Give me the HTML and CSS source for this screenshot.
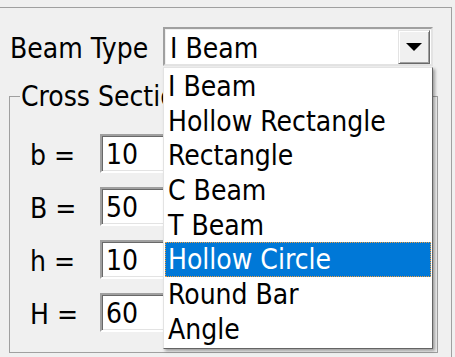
FILE: index.html
```html
<!DOCTYPE html>
<html lang="en">

<head>
    <meta charset="UTF-8">
    <title>Beam</title>
    <link rel="stylesheet" href="styles.css">
</head>

<body>
    <div class="frame">
        <div class="type_row">
            <span class="type_label">Beam Type</span>
            <div class="combo">
                <div class="combo_value">I Beam</div>
                <div class="combo_btn"><span class="arrow"></span></div>
                <ul class="combo_list">
                    <li>I Beam</li>
                    <li>Hollow Rectangle</li>
                    <li>Rectangle</li>
                    <li>C Beam</li>
                    <li>T Beam</li>
                    <li class="selected">Hollow Circle</li>
                    <li>Round Bar</li>
                    <li>Angle</li>
                </ul>
            </div>
        </div>

        <fieldset class="section">
            <legend>Cross Section</legend>
            <div class="field">
                <span class="field_label">b =</span>
                <div class="box">10</div>
            </div>
            <div class="field">
                <span class="field_label">B =</span>
                <div class="box">50</div>
            </div>
            <div class="field">
                <span class="field_label">h =</span>
                <div class="box">10</div>
            </div>
            <div class="field">
                <span class="field_label">H =</span>
                <div class="box">60</div>
            </div>
        </fieldset>
    </div>
</body>

</html>
```

FILE: styles.css
```css
* {
    margin: 0;
    padding: 0;
    box-sizing: border-box;
    list-style: none;
}

body {
    width: 455px;
    height: 357px;
    overflow: hidden;
    background: #f0f0f0;
    color: #000;
    font-family: "DejaVu Sans Condensed", "DejaVu Sans", sans-serif;
    font-stretch: condensed;
    font-size: 28px;
}

.frame {
    margin-top: 7px;
    width: 452px;
    height: 350px;
    border-top: 1px solid #a0a0a0;
    border-right: 1px solid #a0a0a0;
}

.type_row {
    display: flex;
    align-items: center;
    padding: 19px 0 0 10px;
}

.type_label {
    width: 153px;
    padding-top: 4px;
}

.combo {
    position: relative;
    width: 270px;
    height: 39px;
    display: flex;
    align-items: center;
    background: #fff;
    border: 2px solid;
    border-color: #a0a0a0 #e3e3e3 #e3e3e3 #a0a0a0;
    box-shadow: inset 1px 1px 0 #f0f0f0;
}

.combo_value {
    flex: 1;
    padding: 4px 0 0 5px;
}

.combo_btn {
    width: 32px;
    height: 34px;
    margin-right: 1px;
    display: flex;
    align-items: center;
    justify-content: center;
    background: #f0f0f0;
    border: 1px solid;
    border-color: #e3e3e3 #696969 #696969 #e3e3e3;
    box-shadow: inset 1px 1px 0 #fff, inset -1px -1px 0 #a0a0a0;
}

.arrow {
    width: 0;
    height: 0;
    border-left: 8px solid transparent;
    border-right: 8px solid transparent;
    border-top: 8px solid #000;
    margin-top: 1px;
}

.combo_list {
    position: absolute;
    left: -2px;
    top: 38px;
    width: 270px;
    height: 282px;
    padding: 1px;
    background: #fff;
    border: 1px solid;
    border-color: #e3e3e3 #646464 #646464 #e3e3e3;
    box-shadow: 2px 2px 3px rgba(0, 0, 0, .35);
    z-index: 3;
}

.combo_list li {
    height: 34.7px;
    line-height: 32.7px;
    padding: 2px 0 0 3px;
    white-space: nowrap;
}

.combo_list li.selected {
    background: #0078d7;
    color: #fff;
    outline: 1px dotted #f0a040;
    outline-offset: -1px;
}

.section {
    margin: 13px 0 0 9px;
    width: 429px;
    height: 274px;
    border: 1px solid #a0a0a0;
    padding: 21px 0 0 0;
}

.section legend {
    margin-left: 10px;
    padding: 1px 1px 0;
    line-height: 33px;
}

.field {
    display: flex;
    align-items: center;
    padding-left: 20px;
    margin-bottom: 14px;
}

.field_label {
    width: 70px;
    padding-top: 3px;
}

.box {
    width: 200px;
    height: 39px;
    line-height: 33px;
    padding: 2px 0 0 4px;
    background: #fff;
    border: 2px solid;
    border-color: #a0a0a0 #fff #fff #a0a0a0;
    box-shadow: inset 1px 1px 0 #696969, inset -1px -1px 0 #e3e3e3;
}
```
